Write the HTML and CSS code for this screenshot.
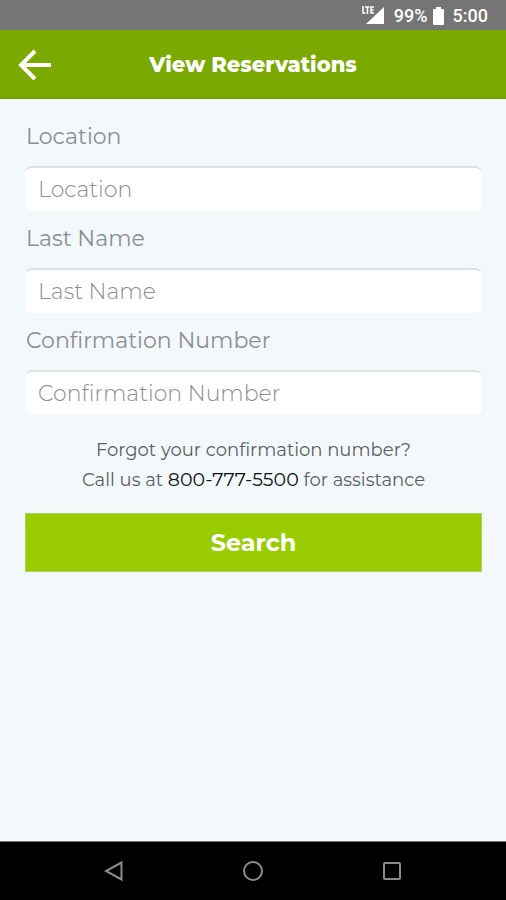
FILE: index.html
```html
<!DOCTYPE html>
<html lang="en">
<head>
<meta charset="utf-8">
<meta name="viewport" content="width=device-width, initial-scale=1">
<title>View Reservations</title>
<link rel="stylesheet" href="styles.css">
</head>
<body>
<div class="status">
  <svg class="signal" width="24" height="20" viewBox="0 0 24 20" aria-hidden="true">
    <path d="M23 1v17H5z" fill="#fff"/>
    <path d="M0 0h14v8l-3 3H0z" fill="#757575"/>
    <path d="M2 0v7h2.500M4 1h4.500M6.500 1v7M13 1h-3v6h3M10 4h2.500" fill="none" stroke="#fff" stroke-width="1.500"/>
  </svg>
  <span class="percent">99%</span>
  <svg class="battery" width="11" height="19" viewBox="0 0 11 19" aria-hidden="true">
    <path d="M3 0h5v2h2q1 0 1 1v14q0 1-1 1H1q-1 0-1-1V3q0-1 1-1h2z" fill="#fff"/>
  </svg>
  <span>5:00</span>
</div>
<header class="appbar">
  <button class="back" type="button" aria-label="Back">
    <svg width="34" height="32" viewBox="0 0 34 32" aria-hidden="true">
      <path d="M33 16H4M17 2L3 16l14 14" fill="none" stroke="#fff" stroke-width="4"/>
    </svg>
  </button>
  <h1 class="title">View Reservations</h1>
</header>
<main class="content">
  <form class="form">
    <div class="field">
      <label for="location">Location</label>
      <input id="location" type="text" placeholder="Location">
    </div>
    <div class="field">
      <label for="lastname">Last Name</label>
      <input id="lastname" type="text" placeholder="Last Name">
    </div>
    <div class="field">
      <label for="confirmation">Confirmation Number</label>
      <input id="confirmation" type="text" placeholder="Confirmation Number">
    </div>
    <p class="help">Forgot your confirmation number?<br>Call us at <a href="tel:8007775500">800-777-5500</a> for assistance</p>
    <button class="search" type="submit">Search</button>
  </form>
</main>
<nav class="navbar">
  <button type="button" aria-label="Back">
    <svg width="22" height="22" viewBox="0 0 22 22"><path d="M18.500 2.500v17L3 11z"/></svg>
  </button>
  <button type="button" aria-label="Home">
    <svg width="22" height="22" viewBox="0 0 22 22"><circle cx="11" cy="11" r="9"/></svg>
  </button>
  <button type="button" aria-label="Recent apps">
    <svg width="22" height="22" viewBox="0 0 22 22"><rect x="3" y="3" width="16" height="16" rx="1"/></svg>
  </button>
</nav>
</body>
</html>
```
FILE: styles.css
```css
* {
  box-sizing: border-box;
}

body {
  margin: 0;
  min-height: 100vh;
  display: flex;
  flex-direction: column;
  background: #f3f8fb;
  font-family: Montserrat, Inter, sans-serif;
}

button {
  border: 0;
  padding: 0;
  background: none;
  font-family: inherit;
}

svg {
  display: block;
}

.status {
  height: 30px;
  padding: 2px 18px 0;
  display: flex;
  align-items: center;
  justify-content: flex-end;
  gap: 9px;
  background: #757575;
  color: #fff;
  font: 500 18px/28px Roboto, sans-serif;
}

.percent {
  margin-right: -4px;
}

.appbar {
  height: 69px;
  padding: 1px 18px 0;
  display: grid;
  grid-template-columns: 34px 1fr 34px;
  align-items: center;
  background: #7aa900;
  border-bottom: 1px solid #6d9800;
}

.title {
  margin: 0;
  color: #fff;
  text-align: center;
  font-size: 21px;
  font-weight: 800;
  line-height: 32px;
}

.content {
  flex: 1;
  padding: 19px 24px 20px 25px;
}

.form {
  display: flex;
  flex-direction: column;
}

.field {
  display: flex;
  flex-direction: column;
  gap: 10px;
  margin-bottom: 9px;
}

.field label {
  padding-left: 1px;
  color: #8c8f92;
  font-size: 22px;
  line-height: 38px;
}

.field input {
  width: 100%;
  height: 45px;
  padding: 0 13px 1px;
  border: 0;
  border-top: 2px solid #dce0e4;
  border-radius: 7px;
  background: #fff;
  color: #555;
  font-family: inherit;
  font-size: 22px;
  font-weight: 300;
}

.field input::placeholder {
  color: #8e8e8e;
  opacity: 1;
}

.help {
  margin: 11px 0 18px;
  color: #5c5f62;
  text-align: center;
  font-size: 18px;
  line-height: 30px;
}

.help a {
  color: #111;
  font-size: 19px;
  text-decoration: none;
}

.search {
  height: 59px;
  border: 1px solid #a9d45a;
  background: #98cc00;
  color: #fff;
  font-size: 24px;
  font-weight: 700;
}

.navbar {
  height: 59px;
  padding: 0 44px;
  display: grid;
  grid-template-columns: repeat(3, 1fr);
  align-items: center;
  justify-items: center;
  background: #000;
  border-top: 1px solid #777;
}

.navbar svg {
  fill: none;
  stroke: #8c8c8c;
  stroke-width: 2;
}
```
